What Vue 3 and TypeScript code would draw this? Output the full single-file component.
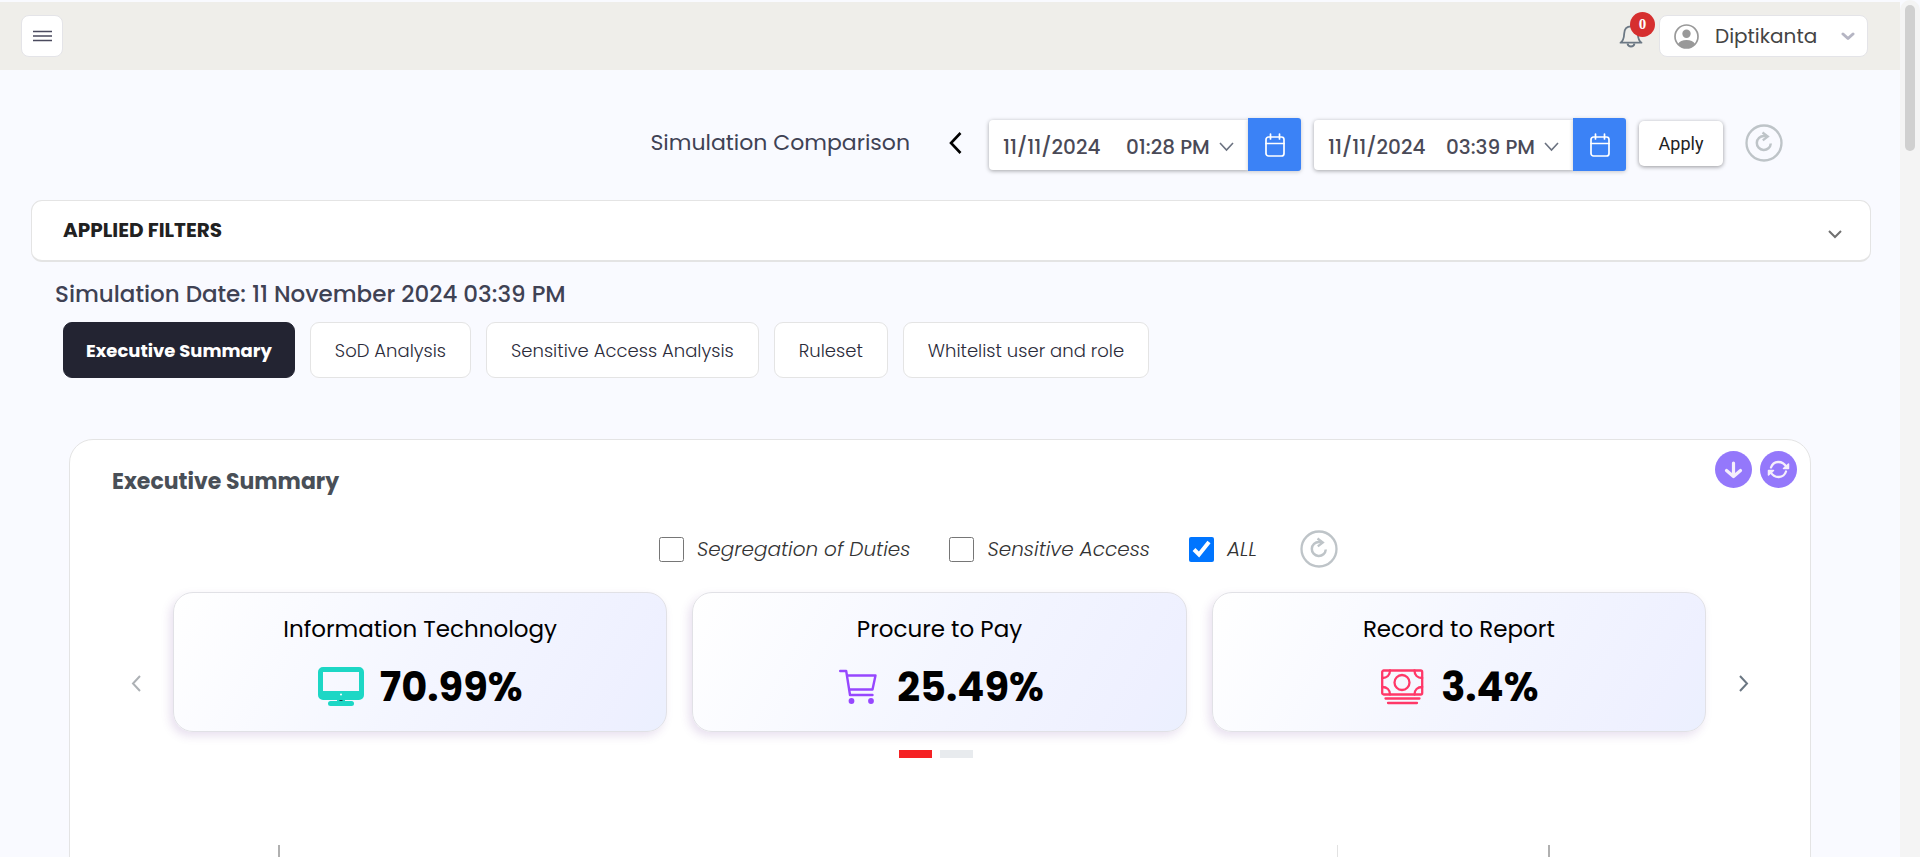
<script setup lang="ts">
import { ref } from 'vue'

type IconName = 'monitor' | 'cart' | 'money'
interface Stamp { id: string; date: string; time: string }
interface Card { title: string; value: string; icon: IconName }

const stamps = ref<Stamp[]>([
  { id: 'first', date: '11/11/2024', time: '01:28 PM' },
  { id: 'second', date: '11/11/2024', time: '03:39 PM' },
])

const tabs = ['Executive Summary', 'SoD Analysis', 'Sensitive Access Analysis', 'Ruleset', 'Whitelist user and role']
const activeTab = ref(tabs[0])

const filters = ref([
  { id: 'sod', label: 'Segregation of Duties', on: false },
  { id: 'sensitive', label: 'Sensitive Access', on: false },
  { id: 'all', label: 'ALL', on: true },
])

const cards: Card[] = [
  { title: 'Information Technology', value: '70.99%', icon: 'monitor' },
  { title: 'Procure to Pay', value: '25.49%', icon: 'cart' },
  { title: 'Record to Report', value: '3.4%', icon: 'money' },
]
const slide = ref(0)
</script>

<template>
  <div class="shell">
    <div class="page">
      <header class="topbar">
        <button class="menu-btn" type="button" aria-label="Menu">
          <svg width="19" height="12" viewBox="0 0 19 12"><path d="M0 1.500h19M0 6h19M0 10.500h19" stroke="#4a4a5e" stroke-width="1.500" /></svg>
        </button>
        <div class="account">
          <button class="bell" type="button" aria-label="Notifications">
            <svg width="24" height="24" viewBox="0 0 24 24" fill="none" stroke="#6c7884" stroke-width="1.800" stroke-linejoin="round">
              <path d="M1.500 18.700c3-1.800 3.500-4.700 3.700-9.200C5.400 5 8 2.300 12 2.300s6.600 2.700 6.800 7.200c.2 4.500.7 7.400 3.700 9.200z" />
              <path d="M8.500 19.500c.4 2.100 1.700 3 3.500 3s3.100-.9 3.500-3" /><path d="M12 .5v2" />
            </svg>
            <span class="badge">0</span>
          </button>
          <button class="user" type="button">
            <svg width="25" height="25" viewBox="0 0 25 25">
              <circle cx="12.500" cy="12.500" r="11.500" fill="none" stroke="#999" stroke-width="1.700" />
              <circle cx="12.500" cy="9.700" r="4.200" fill="#999" />
              <path d="M4 20c1.300-2.700 4.500-4 8.500-4s7.200 1.300 8.500 4c-2 2.600-5 4-8.500 4s-6.500-1.400-8.500-4z" fill="#999" />
            </svg>
            <span class="user-name">Diptikanta</span>
            <svg width="14" height="9" viewBox="0 0 14 9"><path d="M2 2l5 4.500L12 2" fill="none" stroke="#b5b5c3" stroke-width="3" stroke-linecap="round" stroke-linejoin="round" /></svg>
          </button>
        </div>
      </header>

      <main>
        <section class="compare">
          <h1>Simulation Comparison</h1>
          <button class="plain back" type="button" aria-label="Back">
            <svg width="13" height="24" viewBox="0 0 13 24"><path d="M11.500 2L2 12l9.500 10" fill="none" stroke="#000" stroke-width="2.600" /></svg>
          </button>
          <div v-for="s in stamps" :key="s.id" class="stamp">
            <div class="stamp-box">
              <input v-model="s.date" class="date" type="text" :aria-label="`Date, ${s.id}`" />
              <div class="time">
                <select v-model="s.time" :aria-label="`Time, ${s.id}`"><option>{{ s.time }}</option></select>
                <svg width="15" height="10" viewBox="0 0 15 10"><path d="M1 1l6.500 7L14 1" fill="none" stroke="#6b7280" stroke-width="1.600" /></svg>
              </div>
            </div>
            <button class="cal" type="button" aria-label="Open calendar">
              <svg width="20" height="24" viewBox="0 0 20 24" fill="none" stroke="#fff" stroke-width="1.700" stroke-linecap="round"><rect x="1" y="4" width="18" height="19" rx="2.500" /><path d="M1 10.500h18M5.500 1v5M14.500 1v5" /></svg>
            </button>
          </div>
          <button class="apply" type="button">Apply</button>
          <button class="plain" type="button" aria-label="Reset comparison">
            <svg width="38" height="38" viewBox="0 0 38 38" fill="none" stroke="#bec4c8" stroke-width="2.300"><circle cx="19" cy="19" r="17.500" /><path d="M25.800 19.500a7 7 0 1 1-6.800-7.500h3" stroke-width="2.500" /><path d="M17.500 8.500l5.300 4-5 3.800" stroke-width="2.300" /></svg>
          </button>
        </section>

        <button class="applied" type="button">
          <span>APPLIED FILTERS</span>
          <svg width="14" height="9" viewBox="0 0 14 9"><path d="M1 1l6 6 6-6" fill="none" stroke="#707070" stroke-width="2" /></svg>
        </button>

        <h2 class="sim-date">Simulation Date: 11 November 2024 03:39 PM</h2>

        <nav class="tabs">
          <button v-for="t in tabs" :key="t" type="button" :class="{ active: t === activeTab }" @click="activeTab = t">{{ t }}</button>
        </nav>

        <section class="panel">
          <div class="panel-head">
            <h2>Executive Summary</h2>
            <div class="actions">
              <button class="plain" type="button" aria-label="Download">
                <svg width="37" height="37" viewBox="0 0 37 37"><circle cx="18.500" cy="18.500" r="18.500" fill="#9478fb" /><path d="M18.500 12v13M11.500 19.500l7 6 7-6" fill="none" stroke="#f5effb" stroke-width="3.200" stroke-linecap="round" stroke-linejoin="round" /></svg>
              </button>
              <button class="plain" type="button" aria-label="Refresh">
                <svg width="37" height="37" viewBox="0 0 37 37"><circle cx="18.500" cy="18.500" r="18.500" fill="#9478fb" /><g fill="none" stroke="#f5effb" stroke-width="2.300" stroke-linecap="round" stroke-linejoin="round"><path d="M11 16.500c2.300-7 11.300-7.500 15.500-.5M26 20.500c-2.300 7-11.300 7.500-15.500.5" /><path d="M28.500 13v4.500h-5zM8.500 24v-4.500h5z" fill="#f5effb" stroke-width="1.500" /></g></svg>
              </button>
            </div>
          </div>

          <div class="filters">
            <div v-for="f in filters" :key="f.id" class="check">
              <input :id="f.id" v-model="f.on" type="checkbox" />
              <label :for="f.id">{{ f.label }}</label>
            </div>
            <button class="plain" type="button" aria-label="Reset filters">
              <svg width="38" height="38" viewBox="0 0 38 38" fill="none" stroke="#bec4c8" stroke-width="2.300"><circle cx="19" cy="19" r="17.500" /><path d="M25.800 19.500a7 7 0 1 1-6.800-7.500h3" stroke-width="2.500" /><path d="M17.500 8.500l5.300 4-5 3.800" stroke-width="2.300" /></svg>
            </button>
          </div>

          <div class="carousel">
            <button class="plain arrow" type="button" aria-label="Previous" disabled>
              <svg width="10" height="17" viewBox="0 0 10 17"><path d="M9 1L2 8.500 9 16" fill="none" stroke="#adb1b5" stroke-width="2" /></svg>
            </button>
            <div class="cards">
              <article v-for="c in cards" :key="c.title" class="card">
                <h3>{{ c.title }}</h3>
                <div class="figure">
                  <svg v-if="c.icon === 'monitor'" width="46" height="40" viewBox="0 0 46 40">
                    <path fill-rule="evenodd" fill="#1dd7c5" d="M5 0h36a5 5 0 0 1 5 5v23a5 5 0 0 1-5 5H5a5 5 0 0 1-5-5V5a5 5 0 0 1 5-5zM5 5v19h36V5z" />
                    <rect x="10" y="34" width="26" height="5" rx="2.500" fill="#1dd7c5" /><rect x="19" y="32" width="8" height="3" fill="#1dd7c5" />
                    <circle cx="23" cy="27.500" r="1" fill="#fff" /><path d="M21.500 33.500h3" stroke="#173b42" />
                  </svg>
                  <svg v-else-if="c.icon === 'cart'" width="46" height="36" viewBox="-4 0 46 36" fill="none" stroke="#9747ff" stroke-width="2.400" stroke-linecap="round" stroke-linejoin="round">
                    <path d="M1.200 2h6L11 26h22.500M8 6.500h28.500L33.500 20.500H10" /><circle cx="12.500" cy="32" r="2.900" fill="#9747ff" stroke="none" /><circle cx="32" cy="32" r="2.900" fill="#9747ff" stroke="none" />
                  </svg>
                  <svg v-else width="46" height="36" viewBox="-2 0 46 36" fill="none" stroke="#ff3868" stroke-width="2.300" stroke-linecap="round">
                    <rect x="1.200" y="1.500" width="40" height="24" rx="1.500" /><circle cx="21" cy="13.500" r="7.500" />
                    <path d="M9 1.500c0 4.500-3 7.500-7.800 7.500M33.500 1.500c0 4.500 3 7.500 7.700 7.500M9 25.500c0-4.500-3-7.500-7.800-7.500M33.500 25.500c0-4.500 3-7.500 7.700-7.500M4.500 29.500h34M7 34h29" />
                  </svg>
                  <strong>{{ c.value }}</strong>
                </div>
              </article>
            </div>
            <button class="plain arrow" type="button" aria-label="Next" @click="slide = 1">
              <svg width="10" height="17" viewBox="0 0 10 17"><path d="M1 1l7 7.500L1 16" fill="none" stroke="#6b7783" stroke-width="2" /></svg>
            </button>
          </div>

          <div class="dots">
            <button v-for="n in 2" :key="n" type="button" :aria-label="`Slide ${n}`" :class="{ on: slide === n - 1 }" @click="slide = n - 1"></button>
          </div>

          <div class="chart"><div class="gridline"></div></div>
        </section>
      </main>
    </div>
    <div class="scroll-track"><div class="scroll-thumb"></div></div>
  </div>
</template>

<style>
body { margin: 0; background: #f9faff; }
</style>

<style scoped>
.shell { display: flex; height: 100vh; overflow: hidden; background: #f9faff; font-family: Poppins, Inter, "Open Sans", sans-serif; color: #3f4254; }
.shell * { box-sizing: border-box; }
.page { flex: 1; min-width: 0; }
.scroll-track { width: 20px; padding: 5px; background: #f4f4f4; border-radius: 10px 10px 0 0; }
.scroll-thumb { height: 146px; border-radius: 5px; background: #d0d0d0; }
button { font-family: inherit; cursor: pointer; }
svg { display: block; flex: none; }
h1, h2, h3 { margin: 0; }
.plain { padding: 0; border: 0; background: none; }

.topbar { display: flex; justify-content: space-between; align-items: center; height: 68px; margin-top: 2px; padding: 0 32px 0 21px; background: #efeeea; }
.menu-btn { display: grid; place-items: center; width: 42px; height: 42px; padding: 0; border: 1px solid #e4e4e8; border-radius: 8px; background: #fff; }
.account { display: flex; align-items: center; gap: 16px; }
.bell { position: relative; padding: 0; border: 0; background: none; }
.badge { position: absolute; left: 11px; top: -12px; width: 25px; height: 25px; border-radius: 50%; background: #d62f2f; color: #fff; font: bold 15px/25px "Liberation Serif", serif; }
.user { display: flex; align-items: center; width: 209px; height: 42px; padding: 0 12px 0 14px; border: 1px solid #e4e4e8; border-radius: 8px; background: #fff; color: #444; font-size: 20px; }
.user-name { flex: 1; margin-left: 16px; text-align: left; }

.compare { display: flex; justify-content: flex-end; align-items: center; margin-top: 46px; padding-right: 117px; height: 54px; }
.compare h1 { margin-right: 39px; font-size: 22px; font-weight: 400; line-height: 32px; }
.back { margin-right: 27px; }
.stamp { display: flex; align-items: center; margin: 3px 13px 0 0; }
.stamp-box { display: flex; align-items: center; justify-content: space-between; width: 259px; height: 50px; padding: 4px 14px 0 14px; border-radius: 4px 0 0 4px; background: #fff; box-shadow: 0 1px 4px rgba(0, 0, 0, .35); }
.stamp input, .stamp select { padding: 0; border: 0; outline: 0; background: none; color: #4a4a57; font-family: inherit; font-size: 20px; font-weight: 500; line-height: 28px; }
.date { width: 108px; }
.time { display: flex; align-items: center; gap: 9px; }
.time select { appearance: none; }
.cal { display: grid; place-items: center; width: 53px; height: 53px; padding: 0; border: 0; border-radius: 0 3px 3px 0; background: #3b82f6; box-shadow: 0 1px 4px rgba(0, 0, 0, .2); }
.apply { width: 84px; height: 45px; margin-right: 22px; padding: 0; border: 0; border-radius: 5px; background: #fff; box-shadow: 0 1px 4px rgba(0, 0, 0, .4); color: #222; font-family: Roboto, sans-serif; font-size: 18px; }

.applied { display: flex; justify-content: space-between; align-items: center; width: calc(100% - 60px); height: 62px; margin: 30px 29px 0 31px; padding: 0 28px 2px 31px; border: 1px solid #e4e4e4; border-bottom-width: 2px; border-radius: 11px; background: #fff; color: #212121; font-size: 20px; font-weight: 700; }
.applied svg { margin-top: 10px; }
.sim-date { margin: 16px 0 0 55px; font-size: 23px; font-weight: 500; line-height: 32px; }

.tabs { display: flex; gap: 15px; margin: 12px 0 0 63px; }
.tabs button { height: 56px; padding: 0 24px; border: 1px solid #e4e4e4; border-radius: 9px; background: #fff; color: #2b2b3a; font-size: 18px; font-weight: 300; white-space: nowrap; }
.tabs button.active { padding: 0 22px; border-color: #232432; background: #232432; color: #fff; font-weight: 700; }

.panel { margin: 61px 89px 0 69px; border: 1px solid #e4e4e4; border-radius: 24px; background: #fff; }
.panel-head { display: flex; justify-content: space-between; padding: 11px 13px 0 42px; }
.panel-head h2 { margin-top: 15px; color: #494f57; font-size: 22px; font-weight: 700; line-height: 32px; }
.actions { display: flex; gap: 8px; height: 37px; }
.filters { display: flex; justify-content: center; align-items: center; height: 38px; margin: 32px 0 0; padding-left: 117px; }
.check { display: flex; align-items: center; gap: 13px; margin-right: 39px; }
.check input { width: 25px; height: 25px; margin: 0; accent-color: #0075ff; }
.check label { color: #333; font-size: 20px; font-style: italic; font-weight: 300; line-height: 28px; white-space: nowrap; }
.filters .plain { margin-left: 4px; }

.carousel { display: flex; align-items: center; margin-top: 24px; padding: 0 61px 0 61px; }
.arrow { flex: none; margin-top: 42px; }
.cards { flex: 1; display: grid; grid-template-columns: repeat(3, 1fr); gap: 25px; margin: 0 33px 0 32px; }
.card { display: flex; flex-direction: column; align-items: center; height: 140px; padding-top: 20px; border: 1px solid #e1e1e6; border-radius: 20px; background: linear-gradient(120deg, #fff 0%, #f4f6ff 50%, #eef0ff 90%, #ebf0fe 100%); box-shadow: -3px 4px 10px rgba(100, 50, 150, .15); color: #000; }
.card h3 { font-size: 23px; font-weight: 400; line-height: 32px; }
.figure { display: flex; align-items: center; gap: 16px; margin-top: 17px; }
.figure strong { font-size: 40px; line-height: 50px; }
.dots { display: flex; justify-content: center; gap: 8px; margin: 18px 9px 0 0; }
.dots button { width: 33px; height: 8px; padding: 0; border: 0; background: #e8ebee; }
.dots button.on { background: #f52224; }
.chart { height: 400px; margin: 87px 260px 0 208px; border: solid #b0b0b0; border-width: 0 2px; }
.gridline { width: 83.4%; height: 100%; border-right: 1px solid #e2e2e2; }
</style>
